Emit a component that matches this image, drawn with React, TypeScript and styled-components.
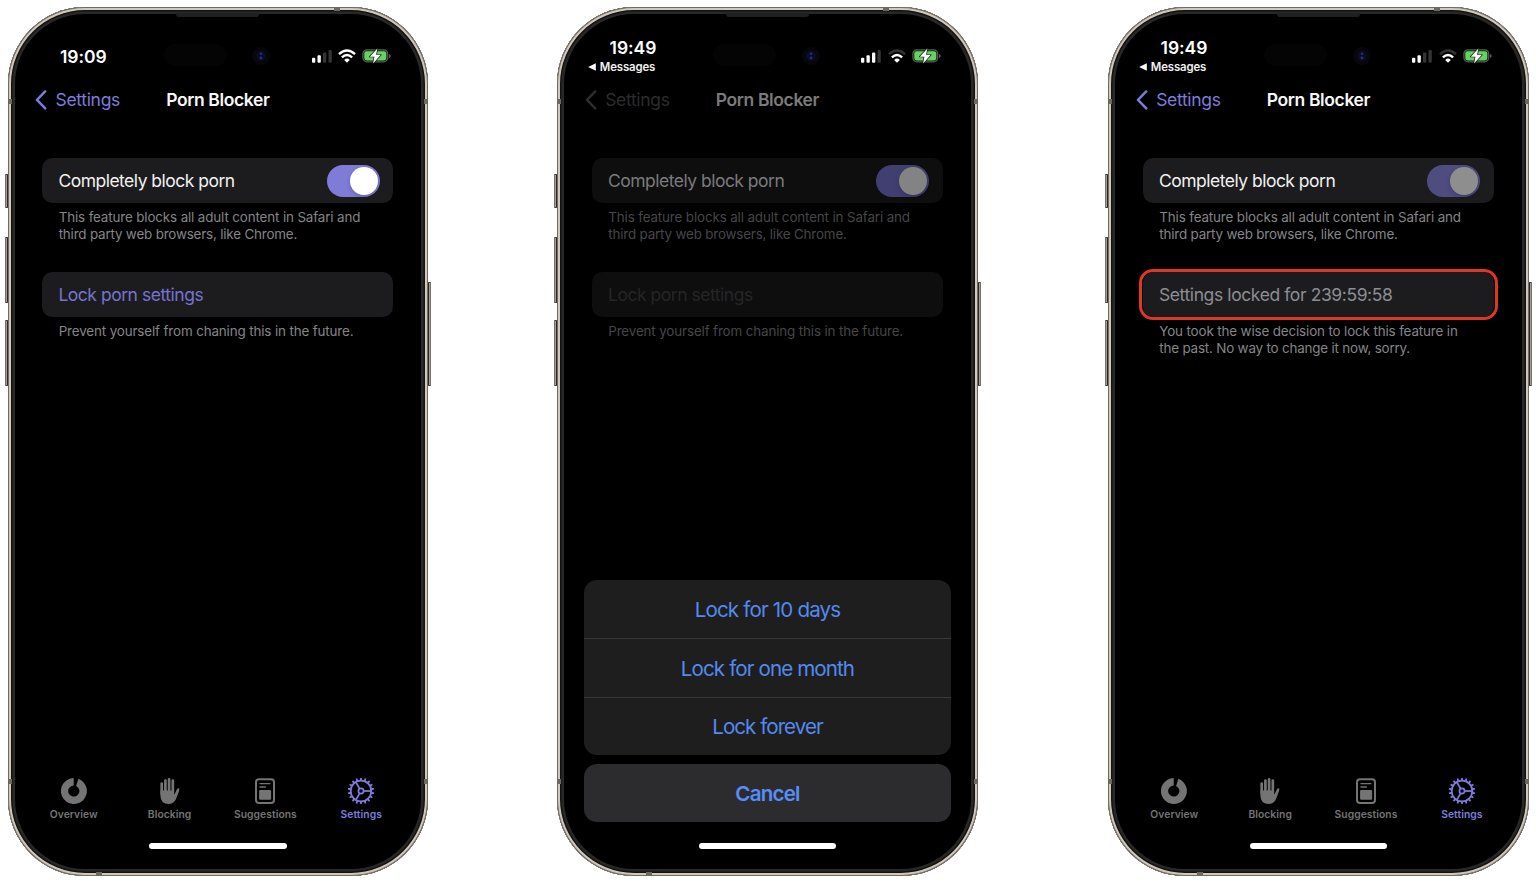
import React from 'react';
import styled, { createGlobalStyle, css, ThemeProvider } from 'styled-components';

type Palette = {
  accent: string;
  back: string;
  title: string;
  card: string;
  text: string;
  action: string;
  note: string;
  track: string;
  knob: string;
};

const normal: Palette = {
  accent: '#7d7bdb',
  back: '#7d7bdb',
  title: '#f7f7f7',
  card: '#1c1c1e',
  text: '#f1f1f1',
  action: '#7673cf',
  note: '#858588',
  track: '#7f7cd8',
  knob: '#ffffff',
};

const locked: Palette = { ...normal, action: '#8d8d92', track: '#4f4d80', knob: '#8e8e8f' };

const dimmed: Palette = {
  ...normal,
  back: '#2d2d2d',
  title: '#7b7b7b',
  card: '#0e0e0f',
  text: '#7b7b7c',
  action: '#252526',
  note: '#464648',
  track: '#413f72',
  knob: '#838383',
};

const GlobalStyle = createGlobalStyle`
  * { box-sizing: border-box; }
  html, body { margin: 0; background: #fff; }
  body { font-family: Inter, "Liberation Sans", sans-serif; font-weight: 400; overflow: hidden; }
`;

const Stage = styled.main`
  display: grid;
  grid-template-columns: 549.6px 551px 420.6px;
  height: 883px;
  padding: 7px 0 0 7.6px;
`;

const Device = styled.section`
  position: relative;
  width: 420.6px;
  height: 868.5px;
  border-radius: 77px;
  background: #000;
  box-shadow:
    inset 0 0 0 1px #6f6a64,
    inset 0 0 0 3px #d0c8bd,
    inset 0 0 0 4.5px #141311,
    inset 0 0 0 7px #272827;
`;

const SideButton = styled.i<{ $top: number; $height: number; $right?: boolean }>`
  position: absolute;
  top: ${(p) => p.$top}px;
  ${(p) => (p.$right ? 'right: -3px' : 'left: -3px')};
  width: 3px;
  height: ${(p) => p.$height}px;
  background: linear-gradient(${(p) => (p.$right ? '270deg' : '90deg')}, #75706a 0 1px, #a59c91 1px 2px, #2c2926 2px);
  border-block: 1px solid #4a4540;
  border-radius: ${(p) => (p.$right ? '0 1px 1px 0' : '1px 0 0 1px')};
`;

const Antenna = styled.i<{ $edge: 'top' | 'bottom' | 'left' | 'right'; $at: number }>`
  position: absolute;
  background: #6c6863;
  ${(p) => p.$edge}: 0;
  ${(p) =>
    p.$edge === 'top' || p.$edge === 'bottom'
      ? css`left: ${p.$at}px; width: 6px; height: 4px;`
      : css`top: ${p.$at}px; width: 4px; height: 5px;`}
`;

const Speaker = styled.i`
  position: absolute;
  top: 6px;
  left: 168.5px;
  width: 83px;
  height: 4px;
  border-radius: 0 0 3px 3px;
  background: #202020;
`;

const Island = styled.i`
  position: absolute;
  top: 37px;
  left: 156px;
  width: 63px;
  height: 22px;
  border-radius: 11px;
  background: #040404;
`;

const Lens = styled.svg`
  position: absolute;
  top: 38.5px;
  left: 243.5px;
`;

const Screen = styled.div`
  display: flex;
  flex-direction: column;
  height: 100%;
  padding: 0 18px;
`;

const StatusBar = styled.header`
  display: flex;
  justify-content: space-between;
  height: 72px;
  padding: 0 19px 0 10px;
`;

const ClockColumn = styled.div<{ $withReturn: boolean }>`
  display: flex;
  flex-direction: column;
  padding-top: ${(p) => (p.$withReturn ? 30 : 39)}px;
  color: #fff;
`;

const Clock = styled.time`
  padding-left: 24.4px;
  font-size: 17.5px;
  font-weight: 600;
  line-height: 21px;
  letter-spacing: -0.05px;
`;

const ReturnLink = styled.span`
  display: flex;
  align-items: center;
  gap: 4px;
  padding-left: 2.6px;
  font-size: 11.4px;
  font-weight: 600;
  line-height: 18px;
  letter-spacing: -0.12px;
  color: #f0f0f0;
`;

const Indicators = styled.div`
  display: flex;
  gap: 6.2px;
  padding-top: 39px;
  height: 60px;
`;

const NavBar = styled.nav`
  display: grid;
  grid-template-columns: 1fr auto 1fr;
  align-items: center;
  height: 41px;
  padding: 0 9.4px;
`;

const Back = styled.a`
  display: flex;
  align-items: center;
  gap: 8.6px;
  font-size: 17.5px;
  line-height: 21px;
  letter-spacing: -0.33px;
  color: ${(p) => (p.theme as Palette).back};
`;

const Title = styled.h1`
  margin: 0;
  font-size: 17.5px;
  font-weight: 600;
  line-height: 21px;
  letter-spacing: -0.38px;
  color: ${(p) => (p.theme as Palette).title};
`;

const Content = styled.div`
  display: flex;
  flex-direction: column;
  gap: 30px;
  padding: 38px 16.9px 0 16.7px;
`;

const Group = styled.section`
  display: flex;
  flex-direction: column;
  min-height: 84px;
`;

const Card = styled.div`
  position: relative;
  display: flex;
  align-items: center;
  justify-content: space-between;
  width: 350.9px;
  height: 45px;
  padding: 0 13.6px 0 16.1px;
  border-radius: 10.5px;
  background: ${(p) => (p.theme as Palette).card};
`;

const Highlight = styled.i`
  position: absolute;
  inset: -3px -4.3px -3px -4px;
  border: 3px solid #dd3726;
  border-radius: 14px;
`;

const Label = styled.span<{ $tracking: number; $action?: boolean }>`
  padding-top: 1px;
  font-size: 17.5px;
  line-height: 22px;
  letter-spacing: ${(p) => p.$tracking}px;
  white-space: nowrap;
  color: ${(p) => (p.$action ? (p.theme as Palette).action : (p.theme as Palette).text)};
`;

const Note = styled.p`
  display: flex;
  flex-direction: column;
  margin: 0;
  padding: 6px 0 0 16.4px;
  font-size: 13.4px;
  line-height: 16.6px;
  white-space: nowrap;
  color: ${(p) => (p.theme as Palette).note};
`;

const NoteLine = styled.span<{ $tight?: boolean }>`
  letter-spacing: ${(p) => (p.$tight ? -0.18 : -0.135)}px;
`;

const Track = styled.span`
  display: flex;
  align-items: center;
  justify-content: flex-end;
  width: 53px;
  height: 32px;
  padding-right: 2px;
  border-radius: 16px;
  background: ${(p) => (p.theme as Palette).track};
`;

const Knob = styled.i`
  width: 28px;
  height: 28px;
  border-radius: 50%;
  background: ${(p) => (p.theme as Palette).knob};
  box-shadow: 0 2px 5px rgba(0, 0, 0, 0.2);
`;

const TabBar = styled.footer`
  display: grid;
  grid-template-columns: repeat(4, 95.85px);
  margin-top: auto;
  padding-left: 0.2px;
  height: 65px;
`;

const Tab = styled.div<{ $active?: boolean }>`
  display: flex;
  flex-direction: column;
  align-items: center;
  gap: 4px;
  font-size: 10.3px;
  font-weight: 600;
  line-height: 13px;
  letter-spacing: 0.06px;
  color: ${(p) => (p.$active ? (p.theme as Palette).accent : '#747474')};
`;

const Sheet = styled.div`
  display: flex;
  flex-direction: column;
  gap: 9px;
  margin: auto 8.6px 21px;
`;

const SheetGroup = styled.div<{ $raised?: boolean }>`
  overflow: hidden;
  border-radius: 13px;
  background: ${(p) => (p.$raised ? '#2c2c2e' : '#1e1e1e')};
`;

const SheetAction = styled.div<{ $height: number; $tracking: number; $bold?: boolean }>`
  display: flex;
  align-items: center;
  justify-content: center;
  height: ${(p) => p.$height}px;
  font-size: 20.6px;
  font-weight: ${(p) => (p.$bold ? 600 : 400)};
  letter-spacing: ${(p) => p.$tracking}px;
  color: ${(p) => (p.$bold ? '#568dfa' : '#5489ee')};
  & + & { border-top: 1px solid #383839; }
`;

const HomeIndicator = styled.i`
  align-self: center;
  flex: none;
  width: 137.6px;
  height: 6px;
  margin-bottom: 26.5px;
  border-radius: 3px;
  background: #fff;
`;

function Signal({ bars }: { bars: number }) {
  return (
    <svg width="20" height="20" viewBox="0 0 20 20">
      {[5, 7.5, 10.2, 12.8].map((h, i) => (
        <rect key={h} x={i * 5.5} y={16.8 - h} width="3.3" height={h} rx="1" fill={i < bars ? '#fff' : '#343434'} />
      ))}
    </svg>
  );
}

function Wifi({ full }: { full: boolean }) {
  return (
    <svg width="18" height="20" viewBox="0 0 18 20" fill="none" strokeWidth="2.4">
      <path d="M1 8.2Q9 0.7 17 8.2" stroke={full ? '#fff' : '#333'} />
      <path d="M3.9 11.3Q9 6.6 14.1 11.3" stroke="#fff" />
      <path d="M6.2 13.9Q9 11.3 11.8 13.9L9 16.8Z" fill="#fff" />
    </svg>
  );
}

function Battery() {
  return (
    <svg width="29" height="20" viewBox="0 0 29 20">
      <rect x="0.9" y="3.8" width="24.8" height="12" rx="4" fill="#0d200c" stroke="#5a5a5c" strokeWidth="1.2" />
      <rect x="2.3" y="5.2" width="22" height="9.2" rx="2.4" fill="#65d361" />
      <path d="M27 8v4q1.7-.6 1.7-2T27 8Z" fill="#5a5a5c" />
      <path
        d="M15.4 2.4 7.7 10.7h4.7l-1.3 6.7 7.8-8.6h-4.8l1.3-6.4Z"
        fill="#fff"
        stroke="#061006"
        strokeWidth="1.3"
        strokeLinejoin="round"
        paintOrder="stroke"
      />
    </svg>
  );
}

function Chevron() {
  return (
    <svg width="12" height="20" viewBox="0 0 12 20" fill="none" stroke="currentColor" strokeWidth="2.4" strokeLinecap="round" strokeLinejoin="round">
      <path d="M10.2 1.4 2 9.9l8.2 8.5" />
    </svg>
  );
}

function OverviewIcon() {
  return (
    <svg width="26" height="26" viewBox="0 0 26 26" fill="currentColor">
      <path d="M12.7 0A13 13 0 1 0 17.4.8L15.1 7.9A5.6 5.6 0 1 1 12.7 7.4Z" />
    </svg>
  );
}

function HandIcon() {
  return (
    <svg width="20" height="26" viewBox="0 0 20 26" fill="currentColor" stroke="currentColor" strokeLinecap="round">
      <path d="M1.7 5.6v10M5.4 2.6v12M9.1 1.3v12M12.8 2.7v13" strokeWidth="2.7" fill="none" />
      <path d="M18.2 11.4 15.4 18" strokeWidth="2.3" fill="none" />
      <path
        d="M.4 12.5h13.7v3.8q.8 0 1.3-1.3l1.4-3.2 2.5.4-2.7 7.2Q14.6 25.9 8.9 25.9 .4 25.9.4 17.2Z"
        stroke="none"
      />
    </svg>
  );
}

function SuggestionsIcon() {
  return (
    <svg width="20" height="26" viewBox="0 0 20 26" fill="none" stroke="currentColor" strokeLinecap="round">
      <rect x="1" y="1.3" width="18" height="23.6" rx="3" strokeWidth="2" />
      <path d="M5 5.6h9.8M5 9h5.4" strokeWidth="1.4" />
      <rect x="4.1" y="12.1" width="12" height="9.6" rx="1.2" fill="currentColor" stroke="none" />
    </svg>
  );
}

function GearIcon() {
  const teeth = Array.from({ length: 18 }, (_, i) => i * 20 + 10);
  return (
    <svg width="28" height="26" viewBox="0 0 28 26" fill="none" stroke="currentColor">
      <g transform="translate(14 13)">
        <circle r="10.3" strokeWidth="1.8" />
        {teeth.map((a) => (
          <path key={a} d="M10.6-1.1 13.2-.8V.8L10.6 1.1Z" transform={`rotate(${a})`} fill="currentColor" stroke="none" />
        ))}
        <circle r="2.6" strokeWidth="1.7" />
        {[0, 120, 240].map((a) => (
          <path key={a} d="M3 0h7" strokeWidth="1.8" transform={`rotate(${a})`} />
        ))}
      </g>
    </svg>
  );
}

function Tabs() {
  return (
    <TabBar>
      <Tab><OverviewIcon />Overview</Tab>
      <Tab><HandIcon />Blocking</Tab>
      <Tab><SuggestionsIcon />Suggestions</Tab>
      <Tab $active><GearIcon />Settings</Tab>
    </TabBar>
  );
}

function LockSheet() {
  return (
    <Sheet>
      <SheetGroup>
        <SheetAction $height={58} $tracking={-0.85}>Lock for 10 days</SheetAction>
        <SheetAction $height={59} $tracking={-0.9}>Lock for one month</SheetAction>
        <SheetAction $height={58} $tracking={-0.98}>Lock forever</SheetAction>
      </SheetGroup>
      <SheetGroup $raised>
        <SheetAction $height={58} $tracking={-0.8} $bold>Cancel</SheetAction>
      </SheetGroup>
    </Sheet>
  );
}

type PhoneProps = {
  palette: Palette;
  time: string;
  returnTo?: string;
  bars: number;
  fullWifi?: boolean;
  action: string;
  actionTracking: number;
  note: string[];
  highlighted?: boolean;
  bottom: React.ReactNode;
};

function Phone(p: PhoneProps) {
  return (
    <ThemeProvider theme={p.palette}>
      <Device>
        <SideButton $top={167} $height={34} />
        <SideButton $top={230} $height={66} />
        <SideButton $top={313} $height={66} />
        <SideButton $top={275} $height={104} $right />
        <Antenna $edge="top" $at={326} />
        <Antenna $edge="bottom" $at={88.5} />
        <Antenna $edge="left" $at={92} />
        <Antenna $edge="right" $at={92} />
        <Antenna $edge="left" $at={772} />
        <Antenna $edge="right" $at={772} />
        <Speaker />
        <Island />
        <Lens width="20" height="20" viewBox="0 0 20 20">
          <circle cx="10" cy="10" r="9" fill="#07060a" />
          <circle cx="10" cy="10" r="5" fill="#0b0b24" />
          <circle cx="10" cy="7.8" r="1.4" fill="#22277a" />
          <circle cx="10" cy="12" r="1.4" fill="#22327e" />
        </Lens>
        <Screen>
          <StatusBar>
            <ClockColumn $withReturn={!!p.returnTo}>
              <Clock>{p.time}</Clock>
              {p.returnTo && (
                <ReturnLink>
                  <svg width="8" height="8" viewBox="0 0 8 8"><path d="M7.8.3v7.4L.1 4Z" fill="#fff" /></svg>
                  {p.returnTo}
                </ReturnLink>
              )}
            </ClockColumn>
            <Indicators>
              <Signal bars={p.bars} />
              <Wifi full={!!p.fullWifi} />
              <Battery />
            </Indicators>
          </StatusBar>
          <NavBar>
            <Back><Chevron />Settings</Back>
            <Title>Porn Blocker</Title>
          </NavBar>
          <Content>
            <Group>
              <Card>
                <Label $tracking={-0.51}>Completely block porn</Label>
                <Track><Knob /></Track>
              </Card>
              <Note>
                <NoteLine>This feature blocks all adult content in Safari and</NoteLine>
                <NoteLine $tight>third party web browsers, like Chrome.</NoteLine>
              </Note>
            </Group>
            <Group>
              <Card>
                <Label $action $tracking={p.actionTracking}>{p.action}</Label>
                {p.highlighted && <Highlight />}
              </Card>
              <Note>
                {p.note.map((line, i) => <NoteLine key={line} $tight={i > 0}>{line}</NoteLine>)}
              </Note>
            </Group>
          </Content>
          {p.bottom}
          <HomeIndicator />
        </Screen>
      </Device>
    </ThemeProvider>
  );
}

export default function App() {
  const prevent = ['Prevent yourself from chaning this in the future.'];
  return (
    <>
      <GlobalStyle />
      <Stage>
        <Phone palette={normal} time="19:09" bars={2} fullWifi action="Lock porn settings" actionTracking={-0.47} note={prevent} bottom={<Tabs />} />
        <Phone palette={dimmed} time="19:49" returnTo="Messages" bars={3} action="Lock porn settings" actionTracking={-0.47} note={prevent} bottom={<LockSheet />} />
        <Phone
          palette={locked}
          time="19:49"
          returnTo="Messages"
          bars={2}
          action="Settings locked for 239:59:58"
          actionTracking={-0.4}
          note={['You took the wise decision to lock this feature in', 'the past. No way to change it now, sorry.']}
          highlighted
          bottom={<Tabs />}
        />
      </Stage>
    </>
  );
}
